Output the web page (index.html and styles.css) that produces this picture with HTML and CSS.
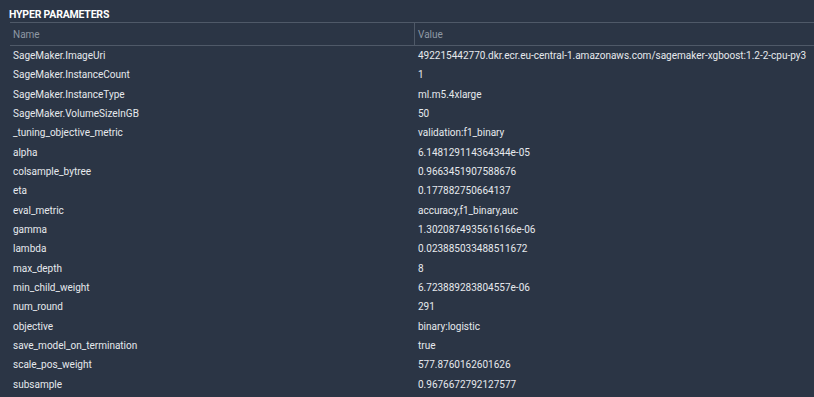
FILE: index.html
```html
<!DOCTYPE html>
<html>
<head>
<meta charset="utf-8">
<link rel="stylesheet" href="styles.css">
</head>
<body>
<section class="panel">
  <h2 class="title">HYPER PARAMETERS</h2>
  <div class="table">
    <div class="row head">
      <div class="cell name">Name</div>
      <div class="cell value">Value</div>
    </div>
    <div class="body">
      <div class="row"><div class="cell name">SageMaker.ImageUri</div><div class="cell value">492215442770.dkr.ecr.eu-central-1.amazonaws.com/sagemaker-xgboost:1.2-2-cpu-py3</div></div>
      <div class="row"><div class="cell name">SageMaker.InstanceCount</div><div class="cell value">1</div></div>
      <div class="row"><div class="cell name">SageMaker.InstanceType</div><div class="cell value">ml.m5.4xlarge</div></div>
      <div class="row"><div class="cell name">SageMaker.VolumeSizeInGB</div><div class="cell value">50</div></div>
      <div class="row"><div class="cell name">_tuning_objective_metric</div><div class="cell value">validation:f1_binary</div></div>
      <div class="row"><div class="cell name">alpha</div><div class="cell value">6.148129114364344e-05</div></div>
      <div class="row"><div class="cell name">colsample_bytree</div><div class="cell value">0.9663451907588676</div></div>
      <div class="row"><div class="cell name">eta</div><div class="cell value">0.177882750664137</div></div>
      <div class="row"><div class="cell name">eval_metric</div><div class="cell value">accuracy,f1_binary,auc</div></div>
      <div class="row"><div class="cell name">gamma</div><div class="cell value">1.3020874935616166e-06</div></div>
      <div class="row"><div class="cell name">lambda</div><div class="cell value">0.023885033488511672</div></div>
      <div class="row"><div class="cell name">max_depth</div><div class="cell value">8</div></div>
      <div class="row"><div class="cell name">min_child_weight</div><div class="cell value">6.723889283804557e-06</div></div>
      <div class="row"><div class="cell name">num_round</div><div class="cell value">291</div></div>
      <div class="row"><div class="cell name">objective</div><div class="cell value">binary:logistic</div></div>
      <div class="row"><div class="cell name">save_model_on_termination</div><div class="cell value">true</div></div>
      <div class="row"><div class="cell name">scale_pos_weight</div><div class="cell value">577.8760162601626</div></div>
      <div class="row"><div class="cell name">subsample</div><div class="cell value">0.9676672792127577</div></div>
    </div>
  </div>
</section>
</body>
</html>
```

FILE: styles.css
```css
html, body {
  margin: 0;
  padding: 0;
  background: #2b3545;
}
body {
  font-family: Roboto, "Noto Sans", sans-serif;
  color: #e6e9ed;
  font-size: 10px;
}
.panel {
  padding: 7px 0 0 10px;
}
.title {
  margin: 0 0 0 -1px;
  font-size: 10.5px;
  font-weight: 700;
  line-height: 15px;
  letter-spacing: -0.2px;
  color: #ffffff;
}
.table {
  border-top: 1px solid #4f5968;
}
.row {
  display: grid;
  grid-template-columns: 404px 1fr;
  height: 19.33px;
  align-items: center;
}
.head {
  height: 22px;
  border-bottom: 1px solid #4f5968;
  color: #8e98a4;
}
.head .value {
  border-left: 1px solid #4f5968;
  align-self: stretch;
  display: flex;
  align-items: center;
  padding-left: 3px;
}
.cell {
  white-space: nowrap;
}
.name {
  padding-left: 3px;
}
.value {
  padding-left: 4px;
}
```
